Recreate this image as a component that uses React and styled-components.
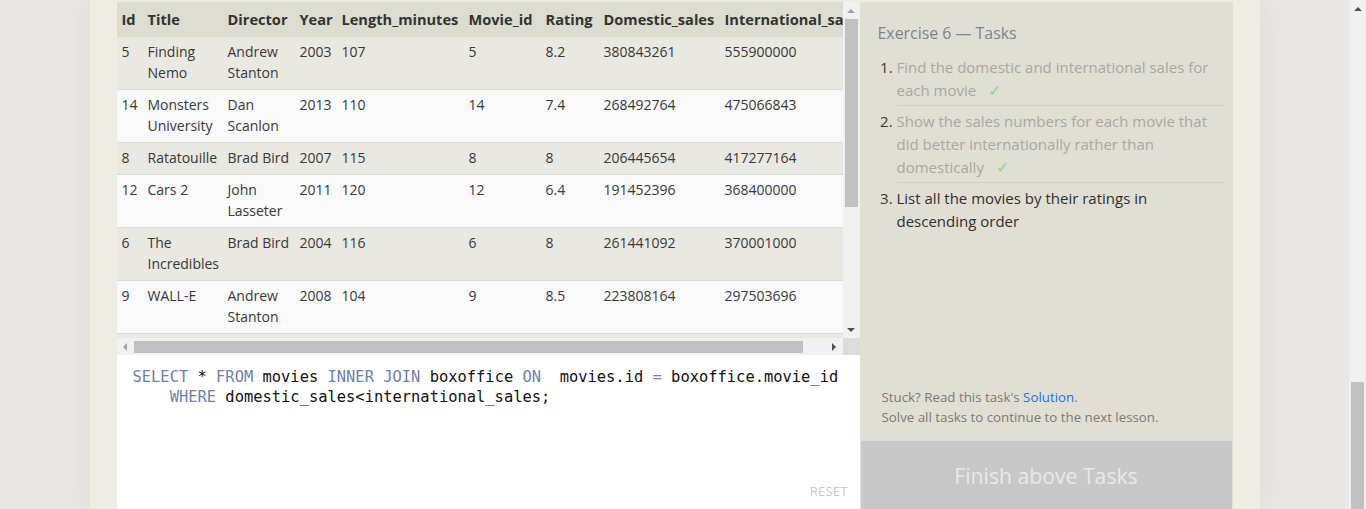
import React from 'react';
import styled, { createGlobalStyle } from 'styled-components';

const GlobalStyle = createGlobalStyle`
  html, body { margin: 0; padding: 0; height: 100%; overflow: hidden; background: #ebe7e4; }
  body { font-family: "Open Sans", "Noto Sans", sans-serif; color: #333; }
  * { box-sizing: border-box; }
`;

const Page = styled.div`
  display: grid;
  grid-template-columns: 1fr 17px;
  height: 509px;
  overflow: hidden;
`;

const Backdrop = styled.div`
  display: flex;
  justify-content: center;
  overflow: hidden;
`;

const Sheet = styled.div`
  width: 1170px;
  flex: none;
  background: #efece4;
  padding: 2px 27px 0;
  box-shadow: 0 0 32px rgba(60, 40, 30, 0.07);
`;

const Workspace = styled.div`
  display: grid;
  grid-template-columns: 743px 373px;
  height: 509px;
`;

const LeftColumn = styled.div`
  display: flex;
  flex-direction: column;
`;

const TableFrame = styled.div`
  display: grid;
  grid-template-columns: 726px 17px;
  grid-template-rows: 336px 17px;
`;

const TableViewport = styled.div`
  overflow: hidden;
  background: #f9f9f9;
`;

const DataTable = styled.table`
  width: 751px;
  table-layout: fixed;
  border-collapse: collapse;
  font-size: 14px;
  line-height: 21px;
  color: #383838;
`;

const HeadCell = styled.th`
  width: ${p => p.$w}px;
  text-align: left;
  font-weight: 700;
  font-size: 14.6px;
  padding: 7px 5px 6px;
  background: #dddcd1;
  white-space: nowrap;
  overflow: hidden;
  color: #333;
`;

const Row = styled.tr`
  background: ${p => (p.$odd ? '#e9e8e1' : '#f9f9f9')};
  border-top: 1px solid #dcdbd4;
`;

const Cell = styled.td`
  padding: 4px 5px 6px;
  vertical-align: top;
  overflow-wrap: normal;
`;

const ScrollTrack = styled.div`
  display: flex;
  flex-direction: ${p => (p.$vertical ? 'column' : 'row')};
  background: #f1f1f1;
`;

const ArrowButton = styled.div`
  width: 17px;
  height: 17px;
  flex: none;
  display: flex;
  align-items: center;
  justify-content: center;
`;

const Triangle = styled.span`
  width: 0;
  height: 0;
  ${p => {
    const c = p.$active ? '#505050' : '#a3a3a3';
    switch (p.$dir) {
      case 'up':
        return `border-left:4px solid transparent;border-right:4px solid transparent;border-bottom:4px solid ${c};`;
      case 'down':
        return `border-left:4px solid transparent;border-right:4px solid transparent;border-top:4px solid ${c};`;
      case 'left':
        return `border-top:4px solid transparent;border-bottom:4px solid transparent;border-right:4px solid ${c};`;
      default:
        return `border-top:4px solid transparent;border-bottom:4px solid transparent;border-left:4px solid ${c};`;
    }
  }}
`;

const Gutter = styled.div`
  flex: 1;
  display: flex;
  flex-direction: ${p => (p.$vertical ? 'column' : 'row')};
  padding: ${p => (p.$vertical ? '0 2px' : '3px 0 2px')};
`;

const Thumb = styled.div`
  background: #c1c1c1;
  flex: none;
  ${p => (p.$vertical ? `height:${p.$size}px;` : `width:${p.$size}px;`)}
`;

const ScrollCorner = styled.div`
  background: #dcdcdc;
`;

const Editor = styled.div`
  flex: 1;
  background: #fff;
  display: flex;
  flex-direction: column;
  padding: 12px 12px 11px 16px;
`;

const Code = styled.pre`
  margin: 0;
  font-family: "DejaVu Sans Mono", "Liberation Mono", monospace;
  font-size: 15.43px;
  line-height: 20px;
  color: #111;
`;

const Kw = styled.span`
  color: #6f7fae;
`;

const Reset = styled.div`
  margin-top: auto;
  align-self: flex-end;
  font-size: 13px;
  color: #c9c9c9;
  letter-spacing: 0.2px;
`;

const TaskPanel = styled.div`
  display: flex;
  flex-direction: column;
  background: #e1dfd4;
`;

const TaskBody = styled.div`
  flex: 1;
  padding: 19px 9px 0 18px;
`;

const TaskTitle = styled.h2`
  margin: 0 0 7px;
  font-size: 15.9px;
  line-height: 24px;
  font-weight: 400;
  color: #7b8392;
`;

const TaskList = styled.ol`
  margin: 0;
  padding: 0 0 0 19px;
  font-size: 15px;
  line-height: 23px;
  color: #3a3a3a;
`;

const TaskItem = styled.li`
  padding: 4px 0 3px;
  border-bottom: ${p => (p.$last ? 'none' : '1px solid #d2cfc4')};
`;

const TaskText = styled.span`
  color: ${p => (p.$done ? '#a9a7a0' : '#2f2f2f')};
`;

const Check = styled.span`
  color: #93d393;
  margin-left: 12px;
  font-size: 16px;
`;

const Help = styled.div`
  padding: 0 0 14px 22px;
  font-size: 13.3px;
  line-height: 20px;
  color: #7d7973;
`;

const SolutionLink = styled.a`
  color: #2a6cde;
  text-decoration: none;
`;

const FinishButton = styled.div`
  height: 70px;
  margin: 0 1px;
  background: #c8c8c8;
  color: #e9e9e9;
  font-size: 21.2px;
  display: flex;
  align-items: center;
  justify-content: center;
  padding-bottom: 2px;
`;

const BrowserScroll = styled.div`
  display: flex;
  flex-direction: column;
  background: #f1f1f1;
`;

const BrowserGutter = styled.div`
  flex: 1;
  display: flex;
  flex-direction: column;
  justify-content: flex-end;
  padding: 0 2px;
`;

const columns = [
  ['Id', 26],
  ['Title', 80],
  ['Director', 72],
  ['Year', 42],
  ['Length_minutes', 127],
  ['Movie_id', 77],
  ['Rating', 58],
  ['Domestic_sales', 121],
  ['International_sales', 148],
];

const rows = [
  ['5', 'Finding Nemo', 'Andrew Stanton', '2003', '107', '5', '8.2', '380843261', '555900000'],
  ['14', 'Monsters University', 'Dan Scanlon', '2013', '110', '14', '7.4', '268492764', '475066843'],
  ['8', 'Ratatouille', 'Brad Bird', '2007', '115', '8', '8', '206445654', '417277164'],
  ['12', 'Cars 2', 'John Lasseter', '2011', '120', '12', '6.4', '191452396', '368400000'],
  ['6', 'The Incredibles', 'Brad Bird', '2004', '116', '6', '8', '261441092', '370001000'],
  ['9', 'WALL-E', 'Andrew Stanton', '2008', '104', '9', '8.5', '223808164', '297503696'],
  ['10', 'Up', 'Pete Docter', '2009', '101', '10', '8.3', '293004164', '438338580'],
];

function Scrollbar({ vertical, size }) {
  return (
    <ScrollTrack $vertical={vertical}>
      <ArrowButton>
        <Triangle $dir={vertical ? 'up' : 'left'} />
      </ArrowButton>
      <Gutter $vertical={vertical}>
        <Thumb $vertical={vertical} $size={size} />
      </Gutter>
      <ArrowButton>
        <Triangle $dir={vertical ? 'down' : 'right'} $active />
      </ArrowButton>
    </ScrollTrack>
  );
}

const tasks = [
  { text: 'Find the domestic and international sales for each movie', done: true },
  { text: 'Show the sales numbers for each movie that did better internationally rather than domestically', done: true },
  { text: 'List all the movies by their ratings in descending order', done: false },
];

export default function App() {
  return (
    <>
      <GlobalStyle />
      <Page>
        <Backdrop>
          <Sheet>
            <Workspace>
              <LeftColumn>
                <TableFrame>
                  <TableViewport>
                    <DataTable>
                      <thead>
                        <tr>
                          {columns.map(([name, w]) => (
                            <HeadCell key={name} $w={w}>{name}</HeadCell>
                          ))}
                        </tr>
                      </thead>
                      <tbody>
                        {rows.map((r, i) => (
                          <Row key={r[0]} $odd={i % 2 === 0}>
                            {r.map((v, j) => (
                              <Cell key={j}>{v}</Cell>
                            ))}
                          </Row>
                        ))}
                      </tbody>
                    </DataTable>
                  </TableViewport>
                  <Scrollbar vertical size={188} />
                  <Scrollbar size={669} />
                  <ScrollCorner />
                </TableFrame>
                <Editor>
                  <Code>
                    <Kw>SELECT</Kw> * <Kw>FROM</Kw> movies <Kw>INNER</Kw> <Kw>JOIN</Kw> boxoffice <Kw>ON</Kw>  movies.id <Kw>=</Kw> boxoffice.movie_id
                    {'\n'}    <Kw>WHERE</Kw> domestic_sales&lt;international_sales;
                  </Code>
                  <Reset>RESET</Reset>
                </Editor>
              </LeftColumn>
              <TaskPanel>
                <TaskBody>
                  <TaskTitle>Exercise 6 — Tasks</TaskTitle>
                  <TaskList>
                    {tasks.map((t, i) => (
                      <TaskItem key={i} $last={i === tasks.length - 1}>
                        <TaskText $done={t.done}>{t.text}</TaskText>
                        {t.done && <Check>✓</Check>}
                      </TaskItem>
                    ))}
                  </TaskList>
                </TaskBody>
                <Help>
                  Stuck? Read this task's <SolutionLink href="#">Solution</SolutionLink>.
                  <br />
                  Solve all tasks to continue to the next lesson.
                </Help>
                <FinishButton>Finish above Tasks</FinishButton>
              </TaskPanel>
            </Workspace>
          </Sheet>
        </Backdrop>
        <BrowserScroll>
          <ArrowButton>
            <Triangle $dir="up" $active />
          </ArrowButton>
          <BrowserGutter>
            <Thumb $vertical $size={127} />
          </BrowserGutter>
        </BrowserScroll>
      </Page>
    </>
  );
}
